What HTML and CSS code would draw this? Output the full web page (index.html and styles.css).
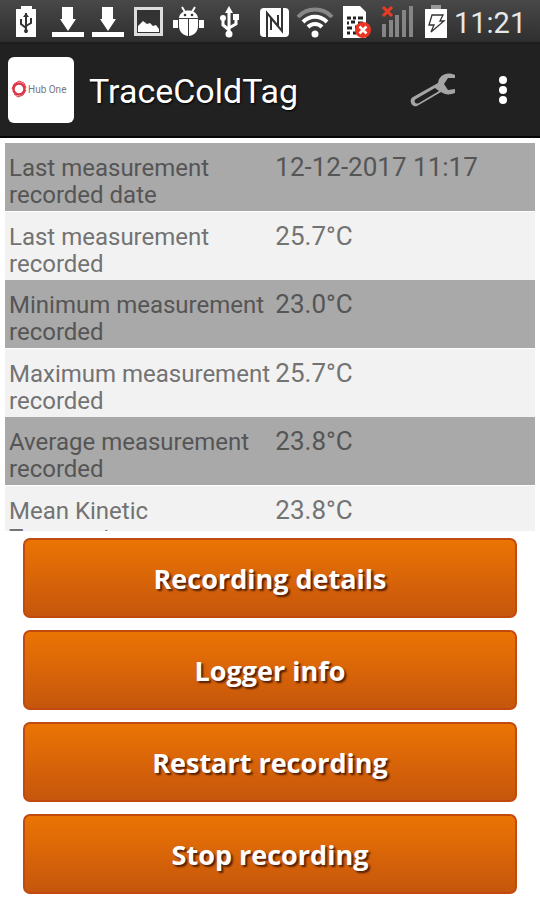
FILE: index.html
```html
<!DOCTYPE html>
<html lang="en">
<head>
<meta charset="utf-8">
<meta name="viewport" content="width=device-width, initial-scale=1">
<title>TraceColdTag</title>
<link rel="stylesheet" href="styles.css">
</head>
<body>
<div class="status">
  <svg class="icon" viewBox="0 0 32 44"><path fill="#fff" d="M11 6h11v3h4v28H6V9h5z"/><path d="M16 13v20M11 19v5l5 4M21 18v5l-5 3" fill="none" stroke="#333" stroke-width="2"/><path fill="#333" d="M13 17l3-4 3 4z"/><circle cx="16" cy="31" r="2" fill="#333"/></svg>
  <svg class="icon" viewBox="0 0 32 44"><path fill="#fff" d="M11 7h11v12h3l-8 12-8-12h2zM1 32h32v5H1z"/></svg>
  <svg class="icon" viewBox="0 0 32 44"><path fill="#fff" d="M10 7h11v12h3l-8 12-8-12h2zM0 32h32v5H0z"/></svg>
  <svg class="icon" viewBox="0 0 32 44"><path fill="#333" stroke="#ddd" stroke-width="3" d="M2.500 8.500h26v26h-26z"/><path fill="#fff" d="M5 32v-6l5-5 4 3 3-1 3 3 3-1 3 4v3z"/></svg>
  <svg class="icon" viewBox="0 0 32 44"><path d="M8 7l3 5M21 7l-3 5" stroke="#fff" stroke-width="2"/><path fill="#fff" d="M5 18c1-10 18-10 19 0zM5 19h9v17c-6-1-9-5-9-10zM15 19h9v7c0 5-3 9-9 10zM-1 20h5v8h-5zM25 20h5v8h-5z"/><circle cx="11" cy="15" r="1.300" fill="#333"/><circle cx="18" cy="15" r="1.300" fill="#333"/></svg>
  <svg class="icon" viewBox="0 0 32 44"><path d="M14 10v24M8 19v6l6 5M21 17v7l-7 4" fill="none" stroke="#fff" stroke-width="3"/><path fill="#fff" d="M10 13l4-7 4 7zM18 14h6v6h-6z"/><circle cx="8" cy="18" r="3" fill="#fff"/><circle cx="14" cy="34" r="3.500" fill="#fff"/></svg>
  <svg class="icon" viewBox="0 0 32 44"><rect x="4" y="8" width="29" height="29" rx="4" fill="#fff"/><path d="M11 37V13l11 13V15M26 8v23L15 18v12" fill="none" stroke="#333" stroke-width="2"/></svg>
  <svg class="icon" viewBox="0 0 32 44"><g fill="none" stroke-width="4"><path stroke="#888" d="M1 17c9-10 25-10 34 0"/><path stroke="#fff" d="M6 22c7-7 17-7 24 0M11 27c4-4 10-4 14 0"/></g><circle cx="18" cy="34" r="3.500" fill="#fff"/></svg>
  <svg class="icon" viewBox="0 0 32 44"><path fill="#fff" d="M5 6h17l6 6v26H5z"/><path d="M9 18h4M15 18h3M20 18h5M9 23h2M13 22h4M20 23h5M9 28h5M17 27h3M9 33h3M15 33h5" stroke="#222" stroke-width="3"/><circle cx="25" cy="30" r="8" fill="#ed3422"/><path d="M21.500 26.500l7 7m0-7l-7 7" stroke="#fff" stroke-width="2.500"/></svg>
  <svg class="icon" viewBox="0 0 32 44"><path fill="#858585" d="M3 24h4v13H3zM10 20h4v17h-4zM16 15h4v22h-4zM23 10h4v27h-4zM30 6h4v31h-4z"/><path d="M4 7l9 9m0-9l-9 9" stroke="#ed3a22" stroke-width="3"/></svg>
  <svg class="icon" viewBox="0 0 32 44"><path fill="#999" d="M11 5h10v4H11z"/><path fill="#fff" d="M5 9h22v29H5z"/><path fill="#fff" stroke="#333" stroke-width="1.300" d="M12 15h11l-3 6h4L11 32l3-7H9z"/></svg>
  <time class="clock">11:21</time>
</div>
<header class="bar">
  <svg class="logo" viewBox="0 0 66 66" role="img" aria-label="Hub One"><rect width="66" height="66" rx="6" fill="#fff"/><circle cx="11" cy="32" r="5.500" fill="none" stroke="#dc3545" stroke-width="2.500"/><path d="M4 32l2-5 5-3 5 2 2 5M18 33l-3 5-5 2-4-3" fill="none" stroke="#dc3545"/><text x="20" y="36" class="logo-text">Hub One</text></svg>
  <h1 class="title">TraceColdTag</h1>
  <button class="tool" aria-label="Settings"><svg width="48" height="36" viewBox="0 0 48 36"><path fill="#a5a5a5" fill-rule="evenodd" d="M45 3C37-1 29 3 28 11L3 25c-5 3-1 11 4 9L31 20c4 3 9 3 14 1v-4l-7 1-4-6 4-6h7zM25 16l4 3L9 31c-4 2-6-2-3-4z"/></svg></button>
  <button class="tool more" aria-label="More options"><svg width="12" height="30" viewBox="0 0 12 30" fill="#fff"><circle cx="6" cy="5" r="4"/><circle cx="6" cy="15" r="4"/><circle cx="6" cy="25" r="4"/></svg></button>
</header>
<main class="main">
  <div class="list">
    <table class="data">
      <tbody>
        <tr><th scope="row">Last measurement recorded date</th><td>12-12-2017 11:17</td></tr>
        <tr><th scope="row">Last measurement recorded</th><td>25.7°C</td></tr>
        <tr><th scope="row">Minimum measurement recorded</th><td>23.0°C</td></tr>
        <tr><th scope="row">Maximum measurement recorded</th><td>25.7°C</td></tr>
        <tr><th scope="row">Average measurement recorded</th><td>23.8°C</td></tr>
        <tr><th scope="row">Mean Kinetic Temperature</th><td>23.8°C</td></tr>
      </tbody>
    </table>
  </div>
  <div class="actions">
    <button class="action">Recording details</button>
    <button class="action">Logger info</button>
    <button class="action">Restart recording</button>
    <button class="action">Stop recording</button>
  </div>
</main>
</body>
</html>
```
FILE: styles.css
```css
* { box-sizing: border-box; }

body {
  margin: 0;
  height: 100vh;
  display: flex;
  flex-direction: column;
  background: #fff;
  font-family: Roboto, "Liberation Sans", sans-serif;
}

.status {
  flex: none;
  display: flex;
  align-items: center;
  gap: 9px;
  height: 44px;
  padding-left: 10px;
  background: linear-gradient(#484848, #303030 92%, #171717);
}

.icon {
  flex: none;
  width: 32px;
  height: 44px;
  overflow: visible;
}

.clock {
  margin-left: -7px;
  padding-top: 2px;
  color: #e8e8e8;
  font-size: 29px;
}

.bar {
  flex: none;
  display: flex;
  align-items: center;
  height: 94px;
  padding: 0 31px 0 8px;
  background: #212121;
  border-bottom: 2px solid #050505;
}

.logo {
  flex: none;
  width: 66px;
  height: 66px;
}

.logo-text {
  font: 10px Roboto, sans-serif;
  fill: #777;
}

.title {
  flex: 1;
  margin: 0 0 0 15px;
  padding-top: 2px;
  color: #fff;
  font-size: 34px;
  font-weight: 400;
  text-shadow: 1px 1px 2px #000;
}

.tool {
  display: flex;
  padding: 0;
  border: 0;
  background: none;
}

.more {
  margin-left: 39px;
}

.main {
  flex: 1;
  min-height: 0;
  display: flex;
  flex-direction: column;
  padding: 5px 5px 6px;
}

.list {
  flex: 1;
  min-height: 0;
  overflow: hidden;
}

.data {
  width: 100%;
  border-collapse: collapse;
  table-layout: fixed;
  color: #737373;
}

.data tr { background: #f2f2f2; }

.data tr:nth-child(odd) {
  background: #a9a9a9;
  color: #555;
}

.data tr:nth-child(even) { border-top: 1px solid #fff; }

.data th,
.data td {
  padding: 12px 0 2px;
  line-height: 27px;
  font-weight: 400;
  text-align: left;
  vertical-align: top;
}

.data th {
  width: 51%;
  padding-left: 4px;
  font-size: 24px;
}

.data td {
  padding-top: 11px;
  font-size: 26px;
}

.actions {
  flex: none;
  display: flex;
  flex-direction: column;
  gap: 12px;
  padding: 7px 18px 0;
}

.action {
  height: 80px;
  border: 2px solid #c04a10;
  border-radius: 7px;
  background: linear-gradient(#ec7404, #c6560c);
  color: #fff;
  font: 700 27px "Open Sans", "Noto Sans", sans-serif;
  text-shadow: 2px 2px 2px #501c08;
}
```
